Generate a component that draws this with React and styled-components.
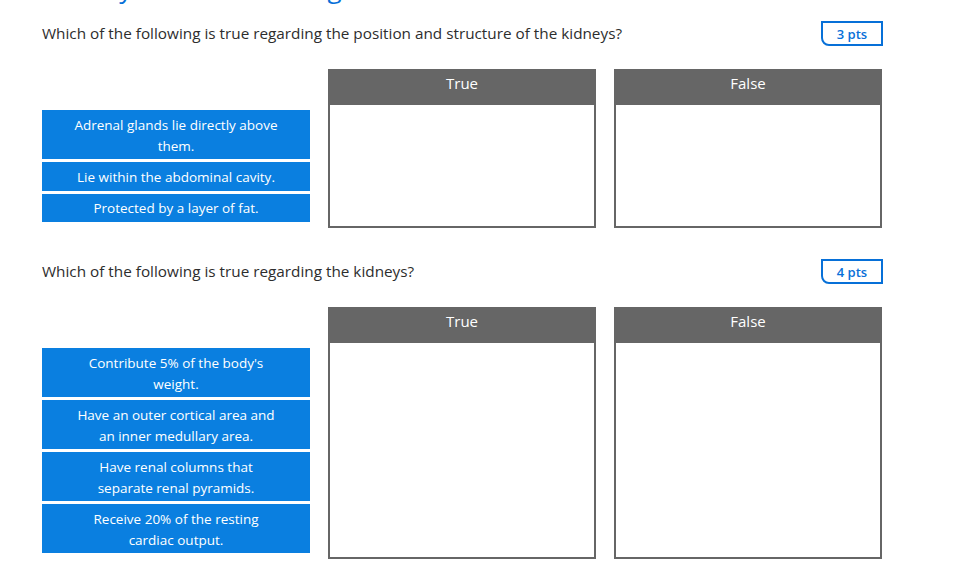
import React from "react";
import styled, { createGlobalStyle } from "styled-components";

const GlobalStyle = createGlobalStyle`
  html, body {
    margin: 0;
    padding: 0;
    background: #fff;
  }
  body {
    font-family: "Open Sans", "Liberation Sans", sans-serif;
    overflow: hidden;
  }
`;

const questions = [
  {
    text: "Which of the following is true regarding the position and structure of the kidneys?",
    pts: "3 pts",
    answers: [
      "Adrenal glands lie directly above them.",
      "Lie within the abdominal cavity.",
      "Protected by a layer of fat.",
    ],
  },
  {
    text: "Which of the following is true regarding the kidneys?",
    pts: "4 pts",
    answers: [
      "Contribute 5% of the body's weight.",
      "Have an outer cortical area and an inner medullary area.",
      "Have renal columns that separate renal pyramids.",
      "Receive 20% of the resting cardiac output.",
    ],
  },
];

function App() {
  return (
    <Page>
      <GlobalStyle />
      <Title>Urinary Structures &amp; Organs</Title>
      {questions.map((q, i) => (
        <Question key={i}>
          <QuestionRow>
            <QuestionText>{q.text}</QuestionText>
            <Points>{q.pts}</Points>
          </QuestionRow>
          <Board>
            <Choices>
              {q.answers.map((a) => (
                <Choice key={a}>{a}</Choice>
              ))}
            </Choices>
            <Bucket>
              <BucketHead>True</BucketHead>
              <BucketBody />
            </Bucket>
            <Bucket>
              <BucketHead>False</BucketHead>
              <BucketBody />
            </Bucket>
          </Board>
        </Question>
      ))}
    </Page>
  );
}

export default App;

const Page = styled.div`
  width: 841px;
  padding-left: 42px;
  display: flex;
  flex-direction: column;
`;
const Title = styled.h1`
  margin: -25px 0 20px;
  font-size: 26px;
  line-height: 26px;
  font-weight: 400;
  color: #0770d8;
  white-space: nowrap;
`;
const Question = styled.div`
  display: flex;
  flex-direction: column;
  gap: 23px;
  margin-bottom: 31px;
`;
const QuestionRow = styled.div`
  display: flex;
  align-items: center;
  justify-content: space-between;
  height: 25px;
`;
const QuestionText = styled.p`
  margin: 0;
  padding-bottom: 1px;
  font-size: 15.3px;
  color: #2d2d2d;
`;
const Points = styled.div`
  box-sizing: border-box;
  width: 62px;
  height: 25px;
  border: 2px solid #0770d8;
  border-radius: 0 0 0 8px;
  display: flex;
  align-items: center;
  justify-content: center;
  font-size: 13px;
  font-weight: 600;
  color: #0770d8;
`;
const Board = styled.div`
  display: grid;
  grid-template-columns: 268px 268px 268px;
  column-gap: 18px;
`;
const Choices = styled.div`
  display: flex;
  flex-direction: column;
  gap: 3px;
  padding: 41px 0 6px;
`;
const Choice = styled.div`
  box-sizing: border-box;
  min-height: 28.5px;
  background: #0a7fe0;
  color: #fff;
  font-size: 13.5px;
  line-height: 21.5px;
  text-align: center;
  padding: 4.5px 30px 1.5px;
`;
const Bucket = styled.div`
  box-sizing: border-box;
  border: 2px solid #666;
  display: flex;
  flex-direction: column;
`;
const BucketHead = styled.div`
  height: 34px;
  background: #666;
  color: #fff;
  font-size: 15px;
  text-align: center;
  padding-top: 1.5px;
  box-sizing: border-box;
`;
const BucketBody = styled.div`
  flex: 1;
  background: #fff;
`;
